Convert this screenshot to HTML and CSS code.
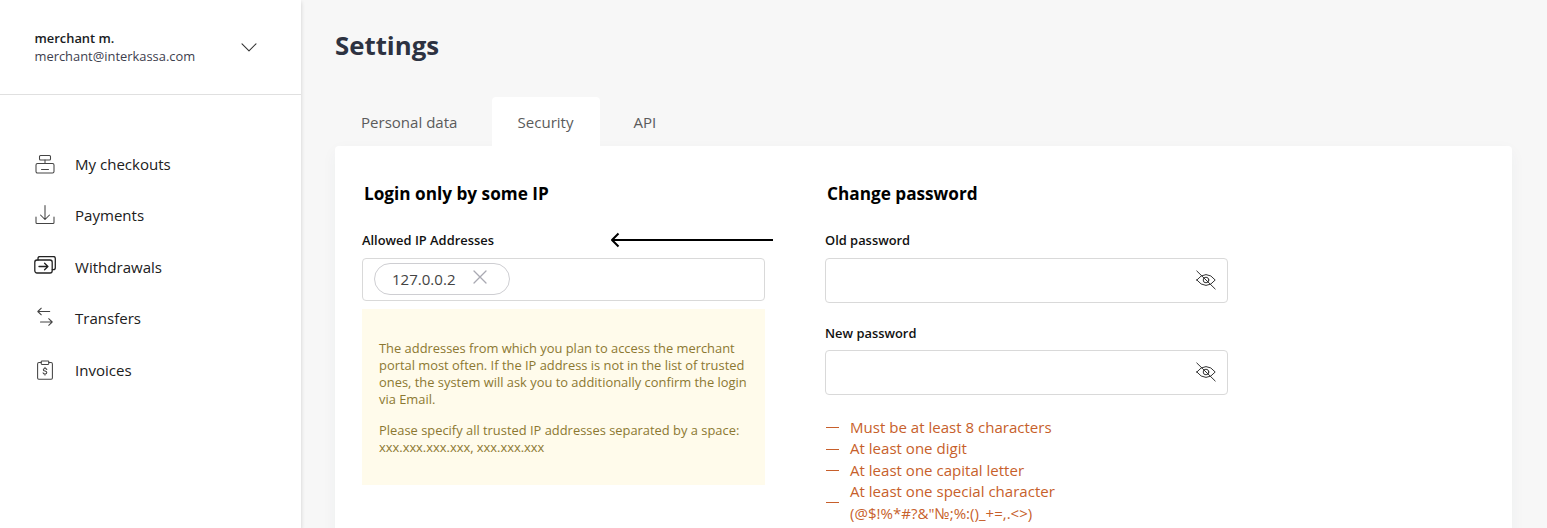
FILE: index.html
```html
<!DOCTYPE html>
<html lang="en">
<head>
<meta charset="utf-8">
<title>Settings</title>
<link rel="stylesheet" href="styles.css">
</head>
<body>
<div class="app">
  <aside class="sidebar">
    <div class="account">
      <div>
        <div class="account-name">merchant m.</div>
        <div class="account-mail">merchant@interkassa.com</div>
      </div>
      <svg class="chevron" width="16" height="9" viewBox="0 0 16 9"><path d="M1 .8 8 7.8 15 .8"/></svg>
    </div>
    <nav class="menu">
      <a class="menu-item"><svg class="icon" viewBox="0 0 22 22"><rect x="5.500" y="2.500" width="11" height="4.500" rx="1"/><path d="M11 7v3.500"/><rect x="2" y="10.500" width="18" height="9.500" rx="1.500"/><path d="M7.500 16.500h7"/></svg>My checkouts</a>
      <a class="menu-item"><svg class="icon" viewBox="0 0 22 22"><path d="M11 1.500v14M6.500 11 11 15.500l4.500-4.500M2 13v5.500q0 1 1 1h16q1 0 1-1V13"/></svg>Payments</a>
      <a class="menu-item"><svg class="icon icon-strong" viewBox="0 1 22 22"><rect x=".8" y="5" width="17.400" height="13" rx="2.200"/><path d="M4 5V3.500q0-2 2-2h13.300q2 0 2 2v9.200q0 2-2 2h-1M5 11.500h8.600M10.600 8.300l3.300 3.200-3.300 3.200"/></svg>Withdrawals</a>
      <a class="menu-item"><svg class="icon" viewBox="0 .5 22 22"><path d="M15.700 5H4M7.300 1.700 3.800 5l3.500 3.300M6.500 15.500H18M14.700 12.200l3.500 3.300-3.500 3.300"/></svg>Transfers</a>
      <a class="menu-item"><svg class="icon" viewBox="0 0 22 22"><path d="M7.200 3.500H5Q3.600 3.500 3.600 4.900v14.200q0 1.200 1.200 1.200h12.400q1.200 0 1.200-1.200V4.900q0-1.400-1.400-1.400h-2.200"/><rect x="7.200" y="2" width="7.600" height="3.400" rx=".8"/><path d="M12.800 10.500q-.3-1.100-1.800-1.100-1.700 0-1.700 1.300 0 1 1.700 1.400 1.800.4 1.800 1.500 0 1.400-1.800 1.400-1.600 0-1.900-1.200M11 8.300v1.100M11 15v1.100"/></svg>Invoices</a>
    </nav>
  </aside>
  <main class="content">
    <h1 class="title">Settings</h1>
    <div class="tabs">
      <div class="tab tab-personal">Personal data</div>
      <div class="tab tab-active">Security</div>
      <div class="tab tab-api">API</div>
    </div>
    <section class="panel">
      <div class="column">
        <h2 class="heading">Login only by some IP</h2>
        <div class="label-row">
          <span class="label">Allowed IP Addresses</span>
          <svg class="arrow" width="164" height="18" viewBox="0 0 164 18"><path d="M163 9H2"/><path d="M8.500 2.500 2 9l6.500 6.500"/></svg>
        </div>
        <div class="field field-ip">
          <span class="chip">127.0.0.2<svg class="close" width="14" height="14" viewBox="0 0 14 14"><path d="m1 1 12 12M13 1 1 13"/></svg></span>
        </div>
        <div class="note">
          <p>The addresses from which you plan to access the merchant<br>portal most often. If the IP address is not in the list of trusted<br>ones, the system will ask you to additionally confirm the login<br>via Email.</p>
          <p>Please specify all trusted IP addresses separated by a space:<br>xxx.xxx.xxx.xxx, xxx.xxx.xxx</p>
        </div>
      </div>
      <div class="column">
        <h2 class="heading">Change password</h2>
        <div class="label-row"><span class="label">Old password</span></div>
        <div class="field field-password"><svg class="eye" width="22" height="20" viewBox="0 0 22 20"><path d="M1.800 10Q6 4.600 11 4.600T20.200 10Q16 15.400 11 15.400T1.800 10ZM1.800 1l18.400 18"/><circle cx="11" cy="10" r="2.800"/></svg></div>
        <div class="label-row label-row-new"><span class="label">New password</span></div>
        <div class="field field-password"><svg class="eye" width="22" height="20" viewBox="0 0 22 20"><path d="M1.800 10Q6 4.600 11 4.600T20.200 10Q16 15.400 11 15.400T1.800 10ZM1.800 1l18.400 18"/><circle cx="11" cy="10" r="2.800"/></svg></div>
        <ul class="rules">
          <li>Must be at least 8 characters</li>
          <li>At least one digit</li>
          <li>At least one capital letter</li>
          <li>At least one special character<br>(@$!%*#?&amp;"№;%:()_+=,.&lt;&gt;)</li>
        </ul>
      </div>
    </section>
  </main>
</div>
</body>
</html>
```
FILE: styles.css
```css
* { box-sizing: border-box; }
body {
  margin: 0;
  background: #f7f7f7;
  color: #1f1f1f;
  font-family: "Open Sans", "Noto Sans", sans-serif;
  overflow: hidden;
}
h1, h2, p, ul { margin: 0; padding: 0; }
svg { fill: none; flex: none; stroke-linecap: round; stroke-linejoin: round; }
.app { display: flex; height: 528px; overflow: hidden; }
.sidebar {
  width: 301px;
  flex: none;
  background: #fff;
  box-shadow: 0 2px 4px rgba(0, 0, 0, .17);
}
.account {
  display: flex;
  justify-content: space-between;
  align-items: center;
  height: 95px;
  padding: 0 44px 0 34.500px;
  border-bottom: 1px solid #e0e0e0;
}
.account-name { font-size: 12.900px; font-weight: 600; line-height: 17px; color: #191b22; }
.account-mail { font-size: 12.900px; line-height: 18px; color: #3d404e; }
.chevron { stroke: #333; stroke-width: 1.100; }
.menu { padding-top: 43px; }
.menu-item {
  display: flex;
  align-items: center;
  gap: 19px;
  height: 51.500px;
  padding-left: 34px;
  font-size: 15.050px;
  color: #202020;
}
.icon { width: 22px; height: 22px; stroke: #444; stroke-width: 1.050; }
.icon-strong { stroke: #222; stroke-width: 1.300; }
.content { flex: 1; padding: 28px 35px 0 34px; }
.title { font-size: 25.800px; line-height: 34px; font-weight: 700; color: #2d3241; }
.tabs { display: flex; height: 50px; margin-top: 35px; }
.tab { padding-top: 14px; font-size: 15.050px; line-height: 22px; color: #5b5b5b; }
.tab-personal { width: 157px; padding-left: 26px; }
.tab-active {
  width: 108px;
  padding-left: 25.500px;
  background: #fff;
  border-radius: 4px 4px 0 0;
}
.tab-api { padding-left: 33.500px; }
.panel {
  display: flex;
  gap: 60px;
  height: 420px;
  margin-top: -1px;
  padding: 35px 27px;
  background: #fff;
  border-radius: 4px;
  box-shadow: 0 5px 16px rgba(30, 60, 90, .045);
}
.column { width: 403px; }
.heading { padding-left: 2px; font-size: 17.200px; line-height: 26px; font-weight: 700; color: #000; }
.label-row {
  display: flex;
  align-items: center;
  justify-content: space-between;
  height: 18px;
  margin-top: 24px;
  margin-bottom: 9px;
}
.label { font-size: 12.900px; font-weight: 600; line-height: 18px; color: #111; }
.label-row-new { margin-top: 21px; margin-bottom: 8px; }
.arrow { margin-right: -9px; stroke: #000; stroke-width: 2; stroke-linecap: butt; }
.field { border: 1px solid #d9d9d9; border-radius: 4px; background: #fff; }
.field-ip { height: 43px; padding: 4px 11px; }
.chip {
  display: flex;
  align-items: center;
  width: 136px;
  height: 32px;
  padding-left: 17px;
  border: 1px solid #ceced2;
  border-radius: 16px;
  font-size: 15.050px;
  color: #444;
}
.close { margin: -4px 0 0 18px; stroke: #a9a9b2; stroke-width: 1.300; }
.note {
  height: 176px;
  margin-top: 8px;
  padding: 31px 17px 0;
  background: #fffbeb;
  color: #8c7831;
  font-size: 12.900px;
  line-height: 17.150px;
  white-space: nowrap;
}
.note p + p { margin-top: 13px; }
.field-password {
  display: flex;
  align-items: center;
  justify-content: flex-end;
  height: 45px;
  padding: 0 10.500px 1px 0;
}
.eye { stroke: #333; stroke-width: 1; }
.rules { margin-top: 22px; list-style: none; color: #c75f2b; font-size: 15.050px; line-height: 21.450px; }
.rules li { display: flex; align-items: center; gap: 11px; }
.rules li::before { content: ""; width: 13px; height: 1px; margin-left: 1px; background: #c75f2b; }
```
